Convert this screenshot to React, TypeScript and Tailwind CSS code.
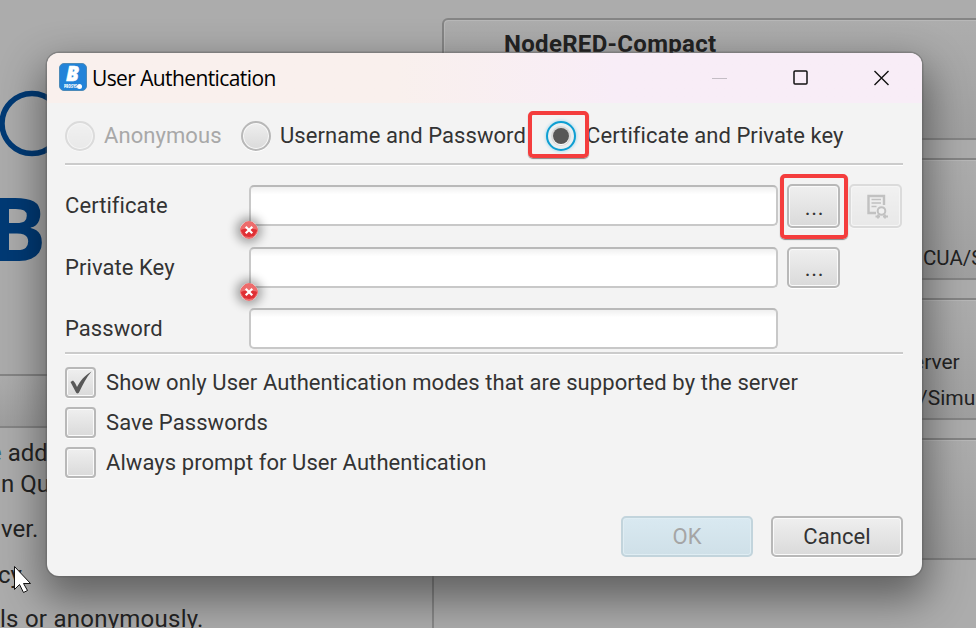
import React from "react";

const raised =
  "border-2 border-[#b8b8b8] bg-gradient-to-b from-[#efefef] to-[#dadada] shadow-[inset_0_0_0_1px_#fafafa,0_1px_0_#fff]";

function ServerCard({ children }: { children?: React.ReactNode }) {
  return (
    <div className="h-[122px] shrink-0 rounded-[6px] border-2 border-[#858585] bg-gradient-to-b from-[#adadad] to-[#a0a0a0] shadow-[inset_1px_1px_0_#b8b8b8]">
      {children}
    </div>
  );
}

function Backdrop() {
  return (
    <div className="flex h-full w-full overflow-hidden bg-[#acacac] text-[24px] leading-[30px] whitespace-nowrap text-[#232323]">
      <div className="flex w-[434px] shrink-0 flex-col">
        <div className="h-[374px] shrink-0 pt-[90px]">
          <svg width="60" height="190" viewBox="0 90 60 190">
            <circle cx="32" cy="123.500" r="30" fill="none" stroke="#003a75" strokeWidth="5.500" />
            <text x="-12" y="260.500" fontFamily="Open Sans" fontWeight="700" fontSize="87" fill="#003a75">B</text>
          </svg>
        </div>
        <div className="h-[54px] shrink-0 border-y-2 border-[#858585] bg-gradient-to-b from-[#adadad] to-[#9e9e9e]" />
        <div className="flex grow flex-col border-r-2 border-[#888] pt-[10px]">
          <div className="h-[31px]"><span className="-ml-[11px] text-[#3c7085]">e</span> add</div>
          <div className="h-[45px] pl-px">n Quick</div>
          <div className="h-[46px] pl-px">ver.</div>
          <div className="-ml-[2px] h-[44px]">cy</div>
          <div className="tracking-[0.25px]">ls or anonymously.</div>
        </div>
      </div>
      <div className="flex w-[560px] shrink-0 flex-col gap-[18px] pt-[18px] pl-2">
        <ServerCard>
          <div className="pt-[9px] pl-[60px] text-[24px] font-bold tracking-[0.3px]">NodeRED-Compact</div>
        </ServerCard>
        <ServerCard>
          <div className="pt-[83px] pl-[479px] text-[20.5px]">CUA/S</div>
        </ServerCard>
        <ServerCard>
          <div className="h-[83px] pt-[47px] pl-[469px] text-[21px]">erver</div>
          <div className="pl-[475px] text-[21px]">/Simul</div>
        </ServerCard>
        <ServerCard />
      </div>
    </div>
  );
}

function AppIcon() {
  return (
    <svg width="28" height="28" viewBox="0 0 28 28" className="-mt-[2px] shrink-0">
      <rect x="0.500" y="0.500" width="27" height="27" rx="4.500" fill="#2283d9" stroke="#4c8ab8" strokeWidth="1" />
      <text x="7" y="18" fontFamily="Open Sans" fontSize="21" fontWeight="800" fontStyle="italic" fill="#fff" stroke="#fff" strokeWidth="0.500" textLength="13" lengthAdjust="spacingAndGlyphs">B</text>
      <text x="5" y="25" fontFamily="Open Sans" fontSize="5" fontWeight="800" fill="#fff" textLength="13" lengthAdjust="spacingAndGlyphs">PROSYS</text>
      <circle cx="20.500" cy="23.500" r="2.500" fill="#fff" />
    </svg>
  );
}

function TitleBar() {
  return (
    <div className="flex h-[50px] shrink-0 items-center bg-gradient-to-r from-[#f9f0ed] from-40% to-[#f8edf7] to-65% pl-3">
      <AppIcon />
      <span className="ml-[5px] w-[400px] font-['Open_Sans',sans-serif] text-[21px] tracking-[-0.6px] text-black">User Authentication</span>
      <svg className="ml-[220px]" width="180" height="18" viewBox="0 0 180 18" fill="none">
        <path d="M0 9.500h15" stroke="#c4bdc5" />
        <rect x="82" y="2" width="13" height="13" rx="1" stroke="#111" strokeWidth="1.500" />
        <path d="M162.500 2l14 14M176.500 2l-14 14" stroke="#111" strokeWidth="1.400" />
      </svg>
    </div>
  );
}

function Radio({ state }: { state: "disabled" | "off" | "on" }) {
  if (state === "on")
    return (
      <span className="flex size-[30px] shrink-0 items-center justify-center rounded-full border-2 border-[#0d9fd3] bg-[#d9d9d9] shadow-[0_0_3px_1px_#b9dfed,inset_0_0_0_3px_#e9eff1]">
        <span className="size-4 rounded-full bg-[#575757] shadow-[0_1px_0_#fff]" />
      </span>
    );
  return <span className={`size-[30px] shrink-0 rounded-full ${raised} ${state === "disabled" ? "opacity-40" : ""}`} />;
}

function Separator() {
  return <div className="h-[3px] w-[838px] shrink-0 border-b border-t-2 border-t-[#cbcbcb] border-b-white" />;
}

function ErrorBadge() {
  return (
    <svg width="18" height="18" viewBox="0 0 18 18" className="absolute -bottom-[15px] -left-[11px] rounded-full shadow-[0_0_10px_4px_rgba(0,0,0,0.32)]">
      <path d="M6 0h6l2 2 2 2 2 3v4l-2 3-4 4H6l-4-4-2-3V7l2-3 2-2z" fill="#ed6c6c" />
      <path d="M1 10c0-2 2-2 8-2s8 0 8 2l-3 5-5 1-5-1z" fill="#df3035" />
      <path d="M6.500 6.500l5 5M11.500 6.500l-5 5" stroke="#fff" strokeWidth="2.200" strokeLinecap="square" />
    </svg>
  );
}

function Field({ label, error }: { label: string; error?: boolean }) {
  return (
    <>
      <label className="w-[184px]">{label}</label>
      <div className="relative h-[41px] w-[529px] rounded-[5px] border-2 border-[#c8c8c8] border-t-[#b9b9b9] bg-white bg-gradient-to-b from-[#f0f0f0] to-white to-20%">
        {error && <ErrorBadge />}
      </div>
    </>
  );
}

function BrowseButton({ tall }: { tall?: boolean }) {
  return (
    <button className={`w-[53px] rounded-[5px] pl-[2px] ${raised} ${tall ? "h-[44px] pt-[4px]" : "h-[41px] pt-[2px]"} text-[22px] leading-[30px] tracking-[0.7px]`}>...</button>
  );
}

function Check({ label, checked }: { label: string; checked?: boolean }) {
  return (
    <label className="flex h-10 items-center gap-[10px]">
      <span className={`size-[31px] shrink-0 rounded-[4px] ${raised}`}>
        {checked && (
          <svg width="27" height="27" viewBox="0 0 27 27">
            <path d="M3.500 13l2.500-1.500c2 2 3 4 4 6.500C13.500 11.500 17 7 24.500 2.500 19 9 16 15 12.500 22.500c-1 2.500-3 2.500-4 0z" fill="#575757" />
          </svg>
        )}
      </span>
      <span className="pt-[2px]">{label}</span>
    </label>
  );
}

function Dialog() {
  return (
    <div className="absolute top-[53px] left-[47px] flex h-[523px] w-[875px] flex-col rounded-[12px] bg-[#f3f3f3] text-[22px] leading-[30px] tracking-[0.07px] whitespace-nowrap text-[#333] shadow-[0_0_0_1.5px_rgba(90,90,90,0.4),0_18px_42px_6px_rgba(0,0,0,0.43)]">
      <div className="overflow-hidden rounded-t-[12px]"><TitleBar /></div>
      <div className="flex grow flex-col pl-[18px]">
        <div className="flex h-[60px] items-center pt-[5px]">
          <Radio state="disabled" />
          <span className="ml-[9px] w-[137px] text-[#a8a8a8]">Anonymous</span>
          <Radio state="off" />
          <span className="ml-[9px] w-[248px]">Username and Password</span>
          <div className="relative z-10 -mt-[2px] flex h-[47px] w-[61px] shrink-0 items-center justify-center rounded-[5px] border-4 border-[#f43d3d] pt-[2px] pl-[4px] shadow-[0_1px_1px_#888]">
            <Radio state="on" />
          </div>
          <span className="-ml-[3px]">Certificate and Private key</span>
        </div>
        <Separator />
        <div className="flex h-[79px] items-center">
          <Field label="Certificate" error />
          <div className="mt-[2px] ml-[2px] flex h-[65px] w-[68px] shrink-0 items-center justify-center rounded-[5px] border-4 border-[#f43d3d] pr-[1px] pb-[2px] shadow-[0_1px_1px_#888]">
            <BrowseButton tall />
          </div>
          <button className={`ml-[1px] flex h-[44px] w-[53px] items-center justify-center rounded-[5px] opacity-40 ${raised}`}>
            <svg width="24" height="27" viewBox="0 0 24 27" fill="none" stroke="#777" className="mt-px ml-[3px]">
              <path d="M11 20H3.500V3H19v9" strokeWidth="2.400" />
              <path d="M6.500 6.500h9.500M6.500 10h9.500M6.500 13.500h5" strokeWidth="1.300" />
              <circle cx="16.500" cy="18" r="3.800" strokeWidth="2" fill="#eee" />
              <path d="M13 21.500v4M10.500 23.500h4.500M20 21.500v4M18 23.500h5" strokeWidth="1.800" />
            </svg>
          </button>
        </div>
        <div className="flex h-[45px] items-center"><Field label="Private Key" error /><div className="ml-[9px] flex"><BrowseButton /></div></div>
        <div className="flex h-[62px] items-center pt-[15px]"><Field label="Password" /></div>
        <Separator />
        <div className="mt-[7px] flex flex-col">
          <Check label="Show only User Authentication modes that are supported by the server" checked />
          <Check label="Save Passwords" />
          <Check label="Always prompt for User Authentication" />
        </div>
        <div className="mt-auto mr-[19px] mb-[19px] flex justify-end gap-[18px]">
          <button className="h-[41px] w-[132px] rounded-[5px] border-2 border-[#c2d4dc] bg-gradient-to-b from-[#d9e9f1] to-[#cfe0e8] text-[#a5a5a5] shadow-[inset_0_0_0_1px_#dfedf3]">OK</button>
          <button className={`h-[41px] w-[132px] rounded-[5px] ${raised}`}>Cancel</button>
        </div>
      </div>
    </div>
  );
}

export default function App() {
  return (
    <div className="relative h-[628px] w-[976px] overflow-hidden font-['Roboto',sans-serif]">
      <Backdrop />
      <Dialog />
      <svg className="absolute top-[566px] left-[14px]" width="18" height="28" viewBox="0 0 18 28">
        <path d="M.5.500v23l5-5 4 8 4-2-4-7h7z" fill="#fff" stroke="#111" />
      </svg>
    </div>
  );
}
